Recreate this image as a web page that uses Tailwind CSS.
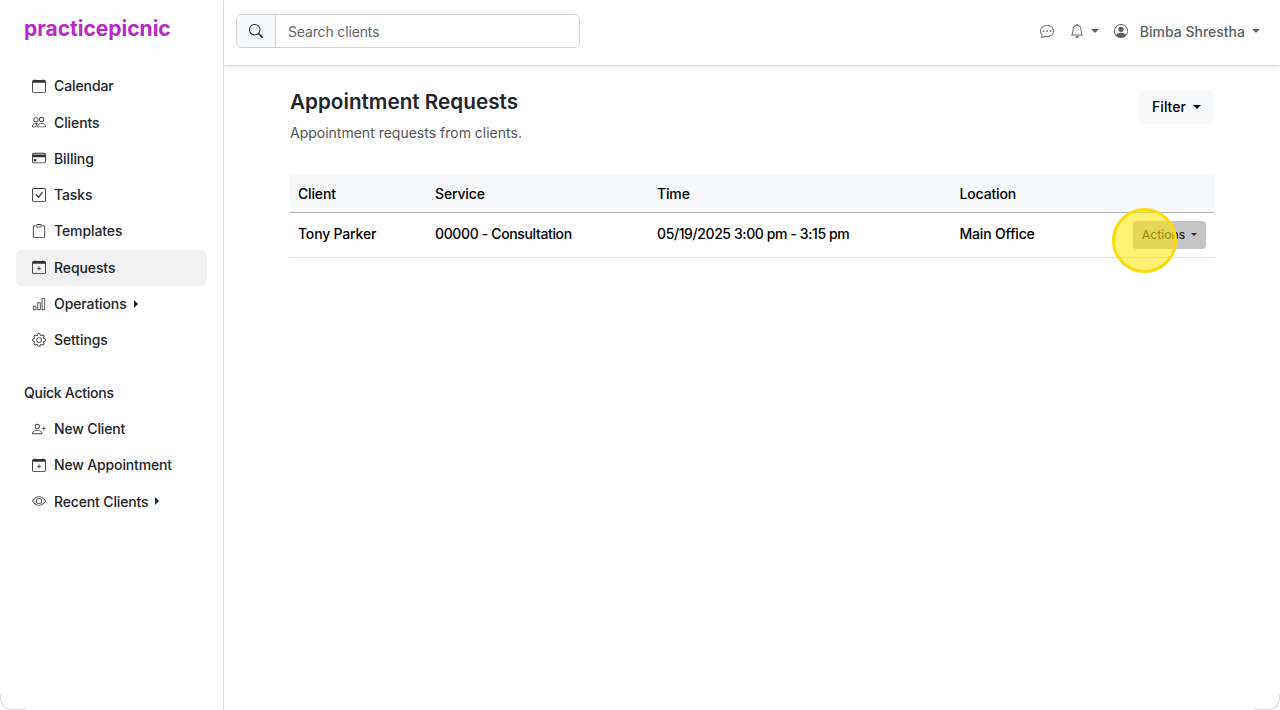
<!DOCTYPE html>
<html lang="en">
<head>
  <meta charset="UTF-8">
  <meta name="viewport" content="width=device-width, initial-scale=1.0">
  <title>Appointment Requests - practicepicnic</title>
  <script src="https://cdn.jsdelivr.net/npm/@tailwindcss/browser@4"></script>
</head>
<body class="bg-white font-['Inter',sans-serif] text-[14px] text-[#212529]">
  <div class="relative flex h-[710px] w-[1280px] overflow-hidden">
    <!-- Sidebar -->
    <aside class="w-[224px] shrink-0 border-r border-[#dee2e6] px-[16px]">
      <div class="h-[68.2px] pt-[14px] pl-[8px] text-[21px] leading-[30px] font-bold text-[#b52ac8]">practicepicnic</div>
      <nav class="tracking-[-0.1px]">
        <a class="flex h-[36.29px] items-center gap-[8px] pb-[1px] pl-[16px] font-medium">
          <svg class="size-[14px] text-[#333]" viewBox="0 0 16 16" fill="currentColor"><path d="M1 2h14v2H1z"/><path d="M3.5 0a.5.5 0 0 1 .5.5V1h8V.5a.5.5 0 0 1 1 0V1h1a2 2 0 0 1 2 2v11a2 2 0 0 1-2 2H2a2 2 0 0 1-2-2V3a2 2 0 0 1 2-2h1V.5a.5.5 0 0 1 .5-.5zM1 4v10a1 1 0 0 0 1 1h12a1 1 0 0 0 1-1V4H1z"/></svg>
          Calendar
        </a>
        <a class="flex h-[36.29px] items-center gap-[8px] pb-[1px] pl-[16px] font-medium">
          <svg class="size-[14px] text-[#444]" viewBox="0 0 16 16" fill="currentColor"><path d="M15 14s1 0 1-1-1-4-5-4-5 3-5 4 1 1 1 1h8Zm-7.978-1A.261.261 0 0 1 7 12.996c.001-.264.167-1.03.76-1.72C8.312 10.629 9.282 10 11 10c1.717 0 2.687.63 3.24 1.276.593.69.758 1.457.76 1.72l-.008.002a.274.274 0 0 1-.014.002H7.022ZM11 7a2 2 0 1 0 0-4 2 2 0 0 0 0 4Zm3-2a3 3 0 1 1-6 0 3 3 0 0 1 6 0ZM6.936 9.28a5.88 5.88 0 0 0-1.23-.247A7.35 7.35 0 0 0 5 9c-4 0-5 3-5 4 0 .667.333 1 1 1h4.216A2.238 2.238 0 0 1 5 13c0-1.01.377-2.042 1.09-2.904.243-.294.526-.569.846-.816ZM4.92 10A5.493 5.493 0 0 0 4 13H1c0-.26.164-1.03.76-1.724.545-.636 1.492-1.256 3.16-1.275ZM1.5 5.5a3 3 0 1 1 6 0 3 3 0 0 1-6 0Zm3-2a2 2 0 1 0 0 4 2 2 0 0 0 0-4Z"/></svg>
          Clients
        </a>
        <a class="flex h-[36.29px] items-center gap-[8px] pb-[1px] pl-[16px] font-medium">
          <svg class="size-[14px] text-[#333]" viewBox="0 0 16 16" fill="currentColor"><path d="M1 4h14v2.5H1z"/><path d="M0 4a2 2 0 0 1 2-2h12a2 2 0 0 1 2 2v8a2 2 0 0 1-2 2H2a2 2 0 0 1-2-2V4zm2-1a1 1 0 0 0-1 1v1h14V4a1 1 0 0 0-1-1H2zm13 4H1v5a1 1 0 0 0 1 1h12a1 1 0 0 0 1-1V7z"/><path d="M2 10a1 1 0 0 1 1-1h1a1 1 0 0 1 1 1v1a1 1 0 0 1-1 1H3a1 1 0 0 1-1-1v-1z"/></svg>
          Billing
        </a>
        <a class="flex h-[36.29px] items-center gap-[8px] pb-[1px] pl-[16px] font-medium">
          <svg class="size-[14px] text-[#333]" viewBox="0 0 16 16" fill="currentColor"><path d="M14 1a1 1 0 0 1 1 1v12a1 1 0 0 1-1 1H2a1 1 0 0 1-1-1V2a1 1 0 0 1 1-1h12zM2 0a2 2 0 0 0-2 2v12a2 2 0 0 0 2 2h12a2 2 0 0 0 2-2V2a2 2 0 0 0-2-2H2z"/><path d="M10.97 4.97a.75.75 0 0 1 1.071 1.05l-3.992 4.99a.75.75 0 0 1-1.08.02L4.324 8.384a.75.75 0 1 1 1.06-1.06l2.094 2.093 3.473-4.425a.235.235 0 0 1 .02-.022z"/></svg>
          Tasks
        </a>
        <a class="flex h-[36.29px] items-center gap-[8px] pb-[1px] pl-[16px] font-medium">
          <svg class="size-[14px] text-[#333]" viewBox="0 0 16 16" fill="currentColor"><path d="M4 1.5H3a2 2 0 0 0-2 2V14a2 2 0 0 0 2 2h10a2 2 0 0 0 2-2V3.5a2 2 0 0 0-2-2h-1v1h1a1 1 0 0 1 1 1V14a1 1 0 0 1-1 1H3a1 1 0 0 1-1-1V3.5a1 1 0 0 1 1-1h1v-1z"/><path d="M9.5 1a.5.5 0 0 1 .5.5v1a.5.5 0 0 1-.5.5h-3a.5.5 0 0 1-.5-.5v-1a.5.5 0 0 1 .5-.5h3zm-3-1A1.5 1.5 0 0 0 5 1.5v1A1.5 1.5 0 0 0 6.5 4h3A1.5 1.5 0 0 0 11 2.5v-1A1.5 1.5 0 0 0 9.5 0h-3z"/></svg>
          Templates
        </a>
        <a class="flex h-[36.29px] items-center gap-[8px] rounded-[6px] bg-[#f1f1f1] pb-[1px] pl-[16px] font-medium">
          <svg class="size-[14px] text-[#333]" viewBox="0 0 16 16" fill="currentColor"><path d="M1 2h14v2H1z"/><path d="M8 7a.5.5 0 0 1 .5.5V9H10a.5.5 0 0 1 0 1H8.5v1.5a.5.5 0 0 1-1 0V10H6a.5.5 0 0 1 0-1h1.5V7.5A.5.5 0 0 1 8 7z"/><path d="M3.5 0a.5.5 0 0 1 .5.5V1h8V.5a.5.5 0 0 1 1 0V1h1a2 2 0 0 1 2 2v11a2 2 0 0 1-2 2H2a2 2 0 0 1-2-2V3a2 2 0 0 1 2-2h1V.5a.5.5 0 0 1 .5-.5zM1 4v10a1 1 0 0 0 1 1h12a1 1 0 0 0 1-1V4H1z"/></svg>
          Requests
        </a>
        <a class="flex h-[36.29px] items-center gap-[8px] pb-[1px] pl-[16px] font-medium">
          <svg class="size-[14px] text-[#444]" viewBox="0 0 16 16" fill="currentColor"><path d="M4 11H2v3h2v-3zm5-4H7v7h2V7zm5-5v12h-2V2h2zm-2-1a1 1 0 0 0-1 1v12a1 1 0 0 0 1 1h2a1 1 0 0 0 1-1V2a1 1 0 0 0-1-1h-2zM6 7a1 1 0 0 1 1-1h2a1 1 0 0 1 1 1v7a1 1 0 0 1-1 1H7a1 1 0 0 1-1-1V7zm-5 4a1 1 0 0 1 1-1h2a1 1 0 0 1 1 1v3a1 1 0 0 1-1 1H2a1 1 0 0 1-1-1v-3z"/></svg>
          Operations
          <span class="ml-[-1px] h-0 w-0 border-y-[4px] border-l-[4px] border-y-transparent border-l-[#212529]"></span>
        </a>
        <a class="flex h-[36.29px] items-center gap-[8px] pb-[1px] pl-[16px] font-medium">
          <svg class="size-[14px] text-[#444]" viewBox="0 0 16 16" fill="currentColor"><path d="M8 4.754a3.246 3.246 0 1 0 0 6.492 3.246 3.246 0 0 0 0-6.492zM5.754 8a2.246 2.246 0 1 1 4.492 0 2.246 2.246 0 0 1-4.492 0z"/><path d="M9.796 1.343c-.527-1.79-3.065-1.79-3.592 0l-.094.319a.873.873 0 0 1-1.255.52l-.292-.16c-1.64-.892-3.433.902-2.54 2.541l.159.292a.873.873 0 0 1-.52 1.255l-.319.094c-1.79.527-1.79 3.065 0 3.592l.319.094a.873.873 0 0 1 .52 1.255l-.16.292c-.892 1.64.901 3.434 2.541 2.54l.292-.159a.873.873 0 0 1 1.255.52l.094.319c.527 1.79 3.065 1.79 3.592 0l.094-.319a.873.873 0 0 1 1.255-.52l.292.16c1.64.893 3.434-.902 2.54-2.541l-.159-.292a.873.873 0 0 1 .52-1.255l.319-.094c1.79-.527 1.79-3.065 0-3.592l-.319-.094a.873.873 0 0 1-.52-1.255l.16-.292c.893-1.64-.902-3.433-2.541-2.54l-.292.159a.873.873 0 0 1-1.255-.52l-.094-.319zm-2.633.283c.246-.835 1.428-.835 1.674 0l.094.319a1.873 1.873 0 0 0 2.693 1.115l.291-.16c.764-.415 1.6.42 1.184 1.185l-.159.292a1.873 1.873 0 0 0 1.116 2.692l.318.094c.835.246.835 1.428 0 1.674l-.319.094a1.873 1.873 0 0 0-1.115 2.693l.16.291c.415.764-.42 1.6-1.185 1.184l-.291-.159a1.873 1.873 0 0 0-2.693 1.116l-.094.318c-.246.835-1.428.835-1.674 0l-.094-.319a1.873 1.873 0 0 0-2.692-1.115l-.292.16c-.764.415-1.6-.42-1.184-1.185l.159-.291A1.873 1.873 0 0 0 1.945 8.93l-.319-.094c-.835-.246-.835-1.428 0-1.674l.319-.094A1.873 1.873 0 0 0 3.06 4.377l-.16-.292c-.415-.764.42-1.6 1.185-1.184l.292.159a1.873 1.873 0 0 0 2.692-1.115l.094-.319z"/></svg>
          Settings
        </a>
      </nav>
      <!-- Quick actions -->
      <div class="flex h-[52.5px] items-center pt-[16px] pl-[8px] font-medium tracking-[-0.25px]">Quick Actions</div>
      <nav class="tracking-[-0.15px]">
        <a class="flex h-[36.29px] items-center gap-[8px] pb-[1px] pl-[16px] font-medium">
          <svg class="size-[14px] text-[#444]" viewBox="0 0 16 16" fill="currentColor"><path d="M6 8a3 3 0 1 0 0-6 3 3 0 0 0 0 6zm2-3a2 2 0 1 1-4 0 2 2 0 0 1 4 0zm4 8c0 1-1 1-1 1H1s-1 0-1-1 1-4 6-4 6 3 6 4zm-1-.004c-.001-.246-.154-.986-.832-1.664C9.516 10.68 8.289 10 6 10c-2.29 0-3.516.68-4.168 1.332-.678.678-.83 1.418-.832 1.664h10z"/><path d="M13.5 5a.5.5 0 0 1 .5.5V7h1.5a.5.5 0 0 1 0 1H14v1.5a.5.5 0 0 1-1 0V8h-1.5a.5.5 0 0 1 0-1H13V5.5a.5.5 0 0 1 .5-.5z"/></svg>
          New Client
        </a>
        <a class="flex h-[36.29px] items-center gap-[8px] pb-[1px] pl-[16px] font-medium">
          <svg class="size-[14px] text-[#333]" viewBox="0 0 16 16" fill="currentColor"><path d="M1 2h14v2H1z"/><path d="M8 7a.5.5 0 0 1 .5.5V9H10a.5.5 0 0 1 0 1H8.5v1.5a.5.5 0 0 1-1 0V10H6a.5.5 0 0 1 0-1h1.5V7.5A.5.5 0 0 1 8 7z"/><path d="M3.5 0a.5.5 0 0 1 .5.5V1h8V.5a.5.5 0 0 1 1 0V1h1a2 2 0 0 1 2 2v11a2 2 0 0 1-2 2H2a2 2 0 0 1-2-2V3a2 2 0 0 1 2-2h1V.5a.5.5 0 0 1 .5-.5zM1 4v10a1 1 0 0 0 1 1h12a1 1 0 0 0 1-1V4H1z"/></svg>
          New Appointment
        </a>
        <a class="flex h-[36.29px] items-center gap-[8px] pb-[1px] pl-[16px] font-medium">
          <svg class="size-[14px] text-[#444]" viewBox="0 0 16 16" fill="currentColor"><path d="M16 8s-3-5.5-8-5.5S0 8 0 8s3 5.5 8 5.5S16 8 16 8zM1.173 8a13.133 13.133 0 0 1 1.66-2.043C4.12 4.668 5.88 3.5 8 3.5c2.12 0 3.879 1.168 5.168 2.457A13.133 13.133 0 0 1 14.828 8c-.058.087-.122.183-.195.288-.335.48-.83 1.12-1.465 1.755C11.879 11.332 10.119 12.5 8 12.5c-2.12 0-3.879-1.168-5.168-2.457A13.134 13.134 0 0 1 1.172 8z"/><path d="M8 5.5a2.5 2.5 0 1 0 0 5 2.5 2.5 0 0 0 0-5zM4.5 8a3.5 3.5 0 1 1 7 0 3.5 3.5 0 0 1-7 0z"/></svg>
          Recent Clients
          <span class="ml-[-1px] h-0 w-0 border-y-[4px] border-l-[4px] border-y-transparent border-l-[#212529]"></span>
        </a>
      </nav>
    </aside>

    <div class="flex min-w-0 flex-1 flex-col">
      <!-- Navbar -->
      <header class="flex h-[66px] shrink-0 items-center justify-between border-b border-[#dcdcdc] pr-[20px] pb-[3px] pl-[12px] shadow-[0_2px_6px_rgba(0,0,0,0.06)]">
        <div class="flex h-[34px] w-[344px] overflow-hidden rounded-[6px] border border-[#ced4da]">
          <span class="flex w-[39px] items-center justify-center border-r border-[#ced4da] bg-[#f6f7f9]">
            <svg class="size-[14px] text-[#212529]" viewBox="0 0 16 16" fill="currentColor"><path d="M11.742 10.344a6.5 6.5 0 1 0-1.397 1.398h-.001c.03.04.062.078.098.115l3.85 3.85a1 1 0 0 0 1.415-1.414l-3.85-3.85a1.007 1.007 0 0 0-.115-.1zM12 6.5a5.5 5.5 0 1 1-11 0 5.5 5.5 0 0 1 11 0z"/></svg>
          </span>
          <input type="text" placeholder="Search clients" class="min-w-0 flex-1 px-[12px] text-[14px] tracking-[-0.15px] placeholder:text-[#666] focus:outline-none">
        </div>
        <div class="flex items-center text-[#5c5f62]">
          <svg class="size-[14px]" viewBox="0 0 16 16" fill="currentColor"><path d="M5 8a1 1 0 1 1-2 0 1 1 0 0 1 2 0zm4 0a1 1 0 1 1-2 0 1 1 0 0 1 2 0zm3 1a1 1 0 1 0 0-2 1 1 0 0 0 0 2z"/><path d="m2.165 15.803.02-.004c1.83-.363 2.948-.842 3.468-1.105A9.06 9.06 0 0 0 8 15c4.418 0 8-3.134 8-7s-3.582-7-8-7-8 3.134-8 7c0 1.76.743 3.37 1.97 4.6a10.437 10.437 0 0 1-.524 2.318l-.003.011a10.722 10.722 0 0 1-.244.637c-.079.186.074.394.273.362a21.673 21.673 0 0 0 .693-.125zm.8-3.108a1 1 0 0 0-.287-.801C1.618 10.83 1 9.468 1 8c0-3.192 3.004-6 7-6s7 2.808 7 6c0 3.193-3.004 6-7 6a8.06 8.06 0 0 1-2.088-.272 1 1 0 0 0-.711.074c-.387.196-1.24.57-2.634.893a10.97 10.97 0 0 0 .398-2z"/></svg>
          <svg class="ml-[16px] size-[14px]" viewBox="0 0 16 16" fill="currentColor"><path d="M8 16a2 2 0 0 0 2-2H6a2 2 0 0 0 2 2zM8 1.918l-.797.161A4.002 4.002 0 0 0 4 6c0 .628-.134 2.197-.459 3.742-.16.767-.376 1.566-.663 2.258h10.244c-.287-.692-.502-1.49-.663-2.258C12.134 8.197 12 6.628 12 6a4.002 4.002 0 0 0-3.203-3.92L8 1.917zM14.22 12c.223.447.481.801.78 1H1c.299-.199.557-.553.78-1C2.68 10.2 3 6.88 3 6c0-2.42 1.72-4.44 4.005-4.901a1 1 0 1 1 1.99 0A5.002 5.002 0 0 1 13 6c0 .88.32 4.2 1.22 6z"/></svg>
          <span class="ml-[7px] h-0 w-0 border-x-[4px] border-t-[4px] border-x-transparent border-t-current"></span>
          <svg class="ml-[15px] size-[14px]" viewBox="0 0 16 16" fill="currentColor"><path d="M11 6a3 3 0 1 1-6 0 3 3 0 0 1 6 0z"/><path fill-rule="evenodd" d="M0 8a8 8 0 1 1 16 0A8 8 0 0 1 0 8zm8-7a7 7 0 0 0-5.468 11.37C3.242 11.226 4.805 10 8 10s4.757 1.225 5.468 2.37A7 7 0 0 0 8 1z"/></svg>
          <span class="ml-[12px] font-medium">Bimba Shrestha</span>
          <span class="ml-[7px] h-0 w-0 border-x-[4px] border-t-[4px] border-x-transparent border-t-current"></span>
        </div>
      </header>

      <!-- Page content -->
      <main class="pt-[24px] pr-[66px] pl-[66px]">
        <div class="flex items-start justify-between">
          <div>
            <h1 class="text-[20.7px] leading-[24px] font-semibold">Appointment Requests</h1>
            <p class="mt-[8px] leading-[21px] text-[#555]">Appointment requests from clients.</p>
          </div>
          <button class="flex h-[34px] w-[75px] items-center justify-center gap-[7px] rounded-[6px] bg-[#f8f9fa] pb-[1px] font-medium text-black">
            Filter
            <span class="h-0 w-0 border-x-[4px] border-t-[4px] border-x-transparent border-t-current"></span>
          </button>
        </div>

        <table class="mt-[32px] w-full table-fixed border-collapse text-left font-medium text-black">
          <thead>
            <tr class="h-[37px] border-b border-[#b5b5b5] bg-[#f7f8f9] tracking-[-0.15px]">
              <th class="w-[137px] pl-[8px] font-medium">Client</th>
              <th class="w-[222px] pl-[8px] font-medium">Service</th>
              <th class="w-[302.5px] pl-[8px] font-medium">Time</th>
              <th class="w-[150px] pl-[8px] font-medium">Location</th>
              <th></th>
            </tr>
          </thead>
          <tbody>
            <tr class="h-[45px] border-b border-[#dee2e6]">
              <td class="pb-[2px] pl-[8px] tracking-[-0.18px]">Tony Parker</td>
              <td class="pb-[2px] pl-[8px] tracking-[-0.36px]">00000 - Consultation</td>
              <td class="pb-[2px] pl-[8px] tracking-[-0.4px]">05/19/2025 3:00 pm - 3:15 pm</td>
              <td class="pb-[2px] pl-[8px] tracking-[-0.18px]">Main Office</td>
              <td class="pr-[8px]">
                <button class="ml-auto flex h-[28px] w-[73px] items-center justify-center gap-[6px] rounded-[4px] bg-[#c4c4c4] text-[12px] font-medium text-[#2a2a2a]">
                  Actions
                  <span class="h-0 w-0 border-x-[3.5px] border-t-[3.5px] border-x-transparent border-t-current"></span>
                </button>
              </td>
            </tr>
          </tbody>
        </table>
      </main>
    </div>

    <!-- Click highlight over the button -->
    <div class="pointer-events-none absolute top-[208px] left-[1112px] size-[65px] rounded-full border-[3px] border-[#f8dc10] bg-[#fde500]/55"></div>
    <!-- Window corners -->
    <div class="pointer-events-none absolute inset-0 rounded-b-[12px] border-b border-x border-[#d8d8d8] [clip-path:polygon(0_97.8%,2%_97.8%,2%_100%,98%_100%,98%_97.8%,100%_97.8%,100%_100%,0_100%)]"></div>
  </div>
</body>
</html>
